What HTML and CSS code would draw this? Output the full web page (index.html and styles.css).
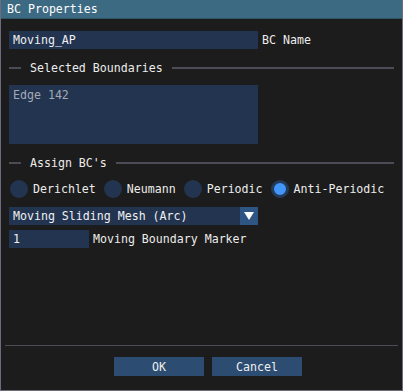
FILE: index.html
```html
<!DOCTYPE html>
<html lang="en">
<head>
    <meta charset="UTF-8">
    <meta name="viewport" content="width=device-width, initial-scale=1.0">
    <title>BC Properties</title>
    <link rel="stylesheet" href="styles.css">
</head>
<body>
    <div class="window">
        <div class="titlebar">BC Properties</div>

        <div class="content">
            <!-- Name -->
            <div class="row">
                <div class="frame name-input">Moving_AP</div>
                <span class="label">BC Name</span>
            </div>

            <!-- Selected boundaries -->
            <div class="separator sep-first">
                <span class="sep-line short"></span>
                <span class="sep-text">Selected Boundaries</span>
                <span class="sep-line"></span>
            </div>
            <div class="frame boundary-list">Edge 142</div>

            <!-- BC type -->
            <div class="separator">
                <span class="sep-line short"></span>
                <span class="sep-text">Assign BC's</span>
                <span class="sep-line"></span>
            </div>
            <div class="row radios">
                <div class="radio"><span class="dot"></span>Derichlet</div>
                <div class="radio"><span class="dot"></span>Neumann</div>
                <div class="radio"><span class="dot"></span>Periodic</div>
                <div class="radio checked"><span class="dot"></span>Anti-Periodic</div>
            </div>

            <div class="row combo-row">
                <div class="frame combo">
                    <span>Moving Sliding Mesh (Arc)</span>
                    <span class="combo-arrow">
                        <svg width="10" height="8" viewBox="0 0 10 8"><polygon points="0,0 10,0 5,8" fill="#ffffff"/></svg>
                    </span>
                </div>
            </div>

            <div class="row marker-row">
                <div class="frame marker-input">1</div>
                <span class="label">Moving Boundary Marker</span>
            </div>
        </div>

        <div class="footer">
            <div class="footer-line"></div>
            <div class="buttons">
                <button class="btn">OK</button>
                <button class="btn">Cancel</button>
            </div>
        </div>
    </div>
</body>
</html>
```

FILE: styles.css
```css
body {
    margin: 0;
    padding: 0;
    background-color: #1c1c1c;
    font-family: "DejaVu Sans Mono", "Liberation Mono", monospace;
    font-size: 11.6px;
    color: #ececec;
}

.window {
    width: 403px;
    height: 391px;
    box-sizing: border-box;
    border: 1px solid #6f6b7c;
    border-top: none;
    background-color: #1c1c1c;
    display: flex;
    flex-direction: column;
}

.titlebar {
    height: 19px;
    line-height: 19px;
    padding-left: 6px;
    background-color: #3d6a83;
    color: #ffffff;
    border-bottom: 1px solid #2e5266;
    box-sizing: border-box;
}

.content {
    flex: 1;
    padding: 12px 8px 0 8px;
    display: flex;
    flex-direction: column;
}

.row {
    display: flex;
    align-items: center;
    height: 18px;
}

.frame {
    background-color: #223450;
    height: 18px;
    line-height: 18px;
    padding: 0 4px;
    box-sizing: border-box;
    color: #f0f0f0;
}

.name-input {
    width: 249px;
}

.separator {
    display: flex;
    align-items: center;
    height: 18px;
    margin-top: 10px;
}

.sep-line {
    flex: 1;
    height: 2px;
    background-color: #4c4c56;
}

.sep-line.short {
    flex: 0 0 12px;
}

.sep-text {
    padding: 0 9px;
}

.boundary-list {
    margin-top: 8px;
    width: 249px;
    height: 59px;
    line-height: 19px;
    padding-top: 1px;
    color: #a4a9b4;
}

.radios {
    margin-top: 8px;
    padding-left: 1px;
}

.radio {
    display: flex;
    align-items: center;
    margin-right: 8px;
}

.dot {
    width: 18px;
    height: 18px;
    border-radius: 50%;
    background-color: #223450;
    margin-right: 5px;
    box-sizing: border-box;
}

.radio.checked .dot {
    background-color: #4296fa;
    border: 3px solid #233a5a;
}

.combo-row {
    margin-top: 9px;
}

.combo {
    width: 249px;
    display: flex;
    justify-content: space-between;
    padding-right: 0;
}

.combo-arrow {
    width: 18px;
    height: 18px;
    background-color: #2f5583;
    display: flex;
    align-items: center;
    justify-content: center;
}

.marker-row {
    margin-top: 5px;
}

.marker-input {
    width: 80px;
}

.label {
    margin-left: 4px;
}

.footer {
    padding: 0 4px 14px 4px;
}

.footer-line {
    height: 1px;
    background-color: #4c4c56;
}

.buttons {
    display: flex;
    gap: 8px;
    margin-top: 11px;
    padding-left: 109px;
}

.btn {
    width: 90px;
    height: 19px;
    border: none;
    background-color: #2c4c72;
    color: #f0f0f0;
    font-family: "DejaVu Sans Mono", "Liberation Mono", monospace;
    font-size: 11.6px;
    padding: 0;
}
```
